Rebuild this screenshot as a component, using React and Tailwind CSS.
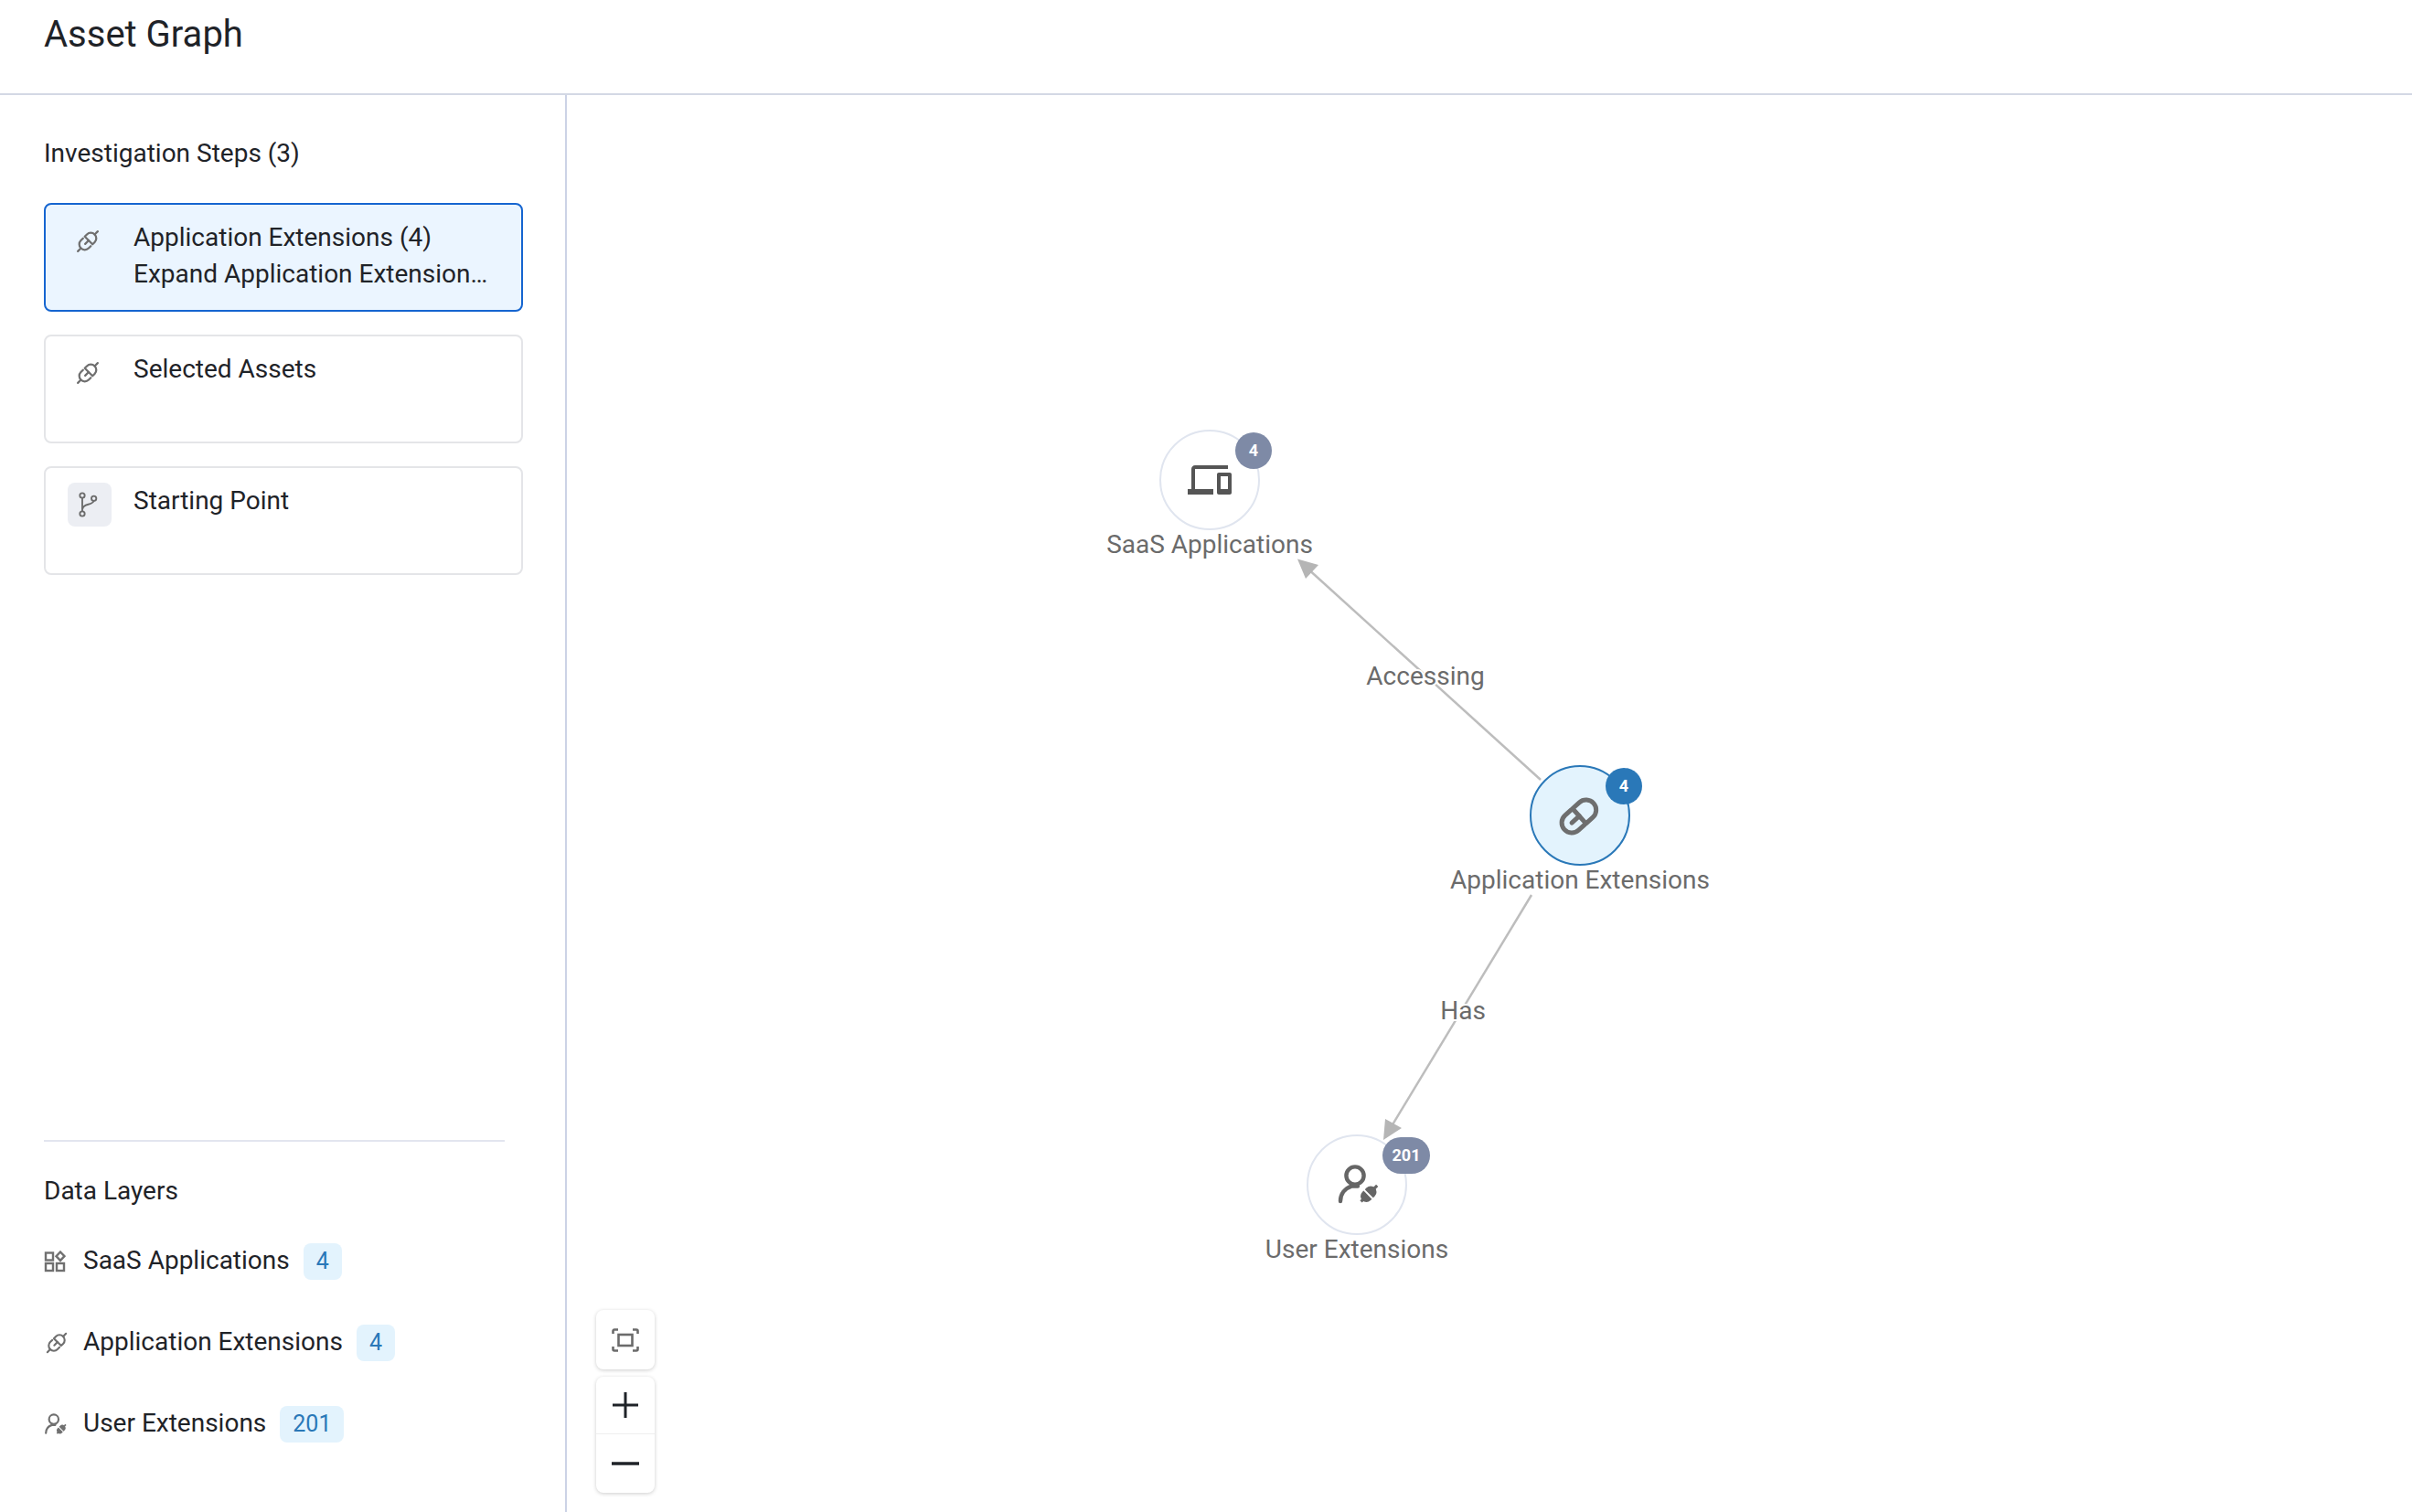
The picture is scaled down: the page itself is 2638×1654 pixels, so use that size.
const font = { fontFamily: "Roboto, sans-serif" };

function PlugIcon({ className, stroke = "#6f6f6f", width = 1.7 }) {
  return (
    <svg viewBox="0 0 24 24" fill="none" stroke={stroke} strokeWidth={width} strokeLinecap="round" strokeLinejoin="round" className={className}>
      <g transform="rotate(-45 12 12)">
        <path d="M0.500 12h3.500" />
        <path d="M11 7.500H8.500a4.500 4.500 0 0 0 0 9H11" />
        <path d="M13 7.500h2.500a4.500 4.500 0 0 1 0 9H13z" />
        <path d="M9 12h4" />
        <path d="M20 12h3.500" />
      </g>
    </svg>
  );
}

function NodeLinkIcon({ className }) {
  return (
    <svg viewBox="0 0 64 64" fill="none" stroke="#6e6e6e" strokeWidth="5" strokeLinecap="round" strokeLinejoin="round" className={className}>
      <g transform="rotate(-42 32 32)">
        <path d="M29 21h-9a11 11 0 0 0 0 22h9" />
        <path d="M31 21h10a11 11 0 0 1 0 22H31z" />
        <path d="M20 32h11" />
      </g>
    </svg>
  );
}

function BranchIcon({ className }) {
  return (
    <svg viewBox="0 0 24 24" fill="none" stroke="#6b6b6b" strokeWidth="1.400" className={className}>
      <circle cx="7.500" cy="4.500" r="2" />
      <circle cx="17" cy="7" r="2" />
      <circle cx="7.500" cy="19.500" r="2" />
      <path d="M7.500 6.500v11" />
      <path d="M7.800 15.500c0-2.200 2-3 4.600-3.700 2.400-.6 4.200-1.200 4.400-2.800" />
    </svg>
  );
}

function GridIcon({ className }) {
  return (
    <svg viewBox="0 0 24 24" fill="none" stroke="#707070" strokeWidth="2.400" className={className}>
      <rect x="2" y="2.500" width="8" height="8" />
      <rect x="2" y="14" width="8" height="8" />
      <rect x="14" y="14" width="8" height="8" />
      <path d="M18 1.500l4.500 4.700-4.500 4.700-4.500-4.700z" />
    </svg>
  );
}

function UserPlugIcon({ className, color = "#707070", sw = 2 }) {
  return (
    <svg viewBox="0 0 24 24" fill="none" stroke={color} strokeWidth={sw} strokeLinecap="round" className={className}>
      <circle cx="10" cy="7" r="4.800" />
      <path d="M2 21c0-4 2.500-7 6-8.200h3.500" />
      <g transform="rotate(-45 17.500 17)" fill={color} stroke="none">
        <path d="M11.500 16.200h2.400v1.600h-2.400z" />
        <path d="M16.700 13.800h-1a3.200 3.200 0 0 0 0 6.400h1z" />
        <path d="M17.700 13.800h1.300a3.200 3.200 0 0 1 0 6.400h-1.300z" />
        <path d="M21.500 16.200H24v1.600h-2.500z" />
      </g>
    </svg>
  );
}

function DevicesIcon({ className }) {
  return (
    <svg viewBox="0 0 24 24" fill="#555555" className={className}>
      <path d="M4 6h18V4H4c-1.100 0-2 .9-2 2v11H0v3h14v-3H4V6zm19 2h-6c-.55 0-1 .45-1 1v10c0 .55.45 1 1 1h6c.55 0 1-.45 1-1V9c0-.55-.45-1-1-1zm-1 9h-4v-7h4v7z" />
    </svg>
  );
}

function FitIcon({ className }) {
  return (
    <svg viewBox="0 0 30 26" fill="none" stroke="#6b6b6b" strokeWidth="2.600" className={className}>
      <path d="M1.500 6V3A1.500 1.500 0 0 1 3 1.500h4" />
      <path d="M23 1.500h4A1.500 1.500 0 0 1 28.500 3v3" />
      <path d="M28.500 20v3a1.500 1.500 0 0 1-1.500 1.500h-4" />
      <path d="M7 24.500H3A1.500 1.500 0 0 1 1.500 23v-3" />
      <rect x="7.500" y="7" width="15" height="12" />
    </svg>
  );
}

function StepCard({ active, lines }) {
  return (
    <div className={active
      ? "h-[119px] rounded-lg border-2 border-[#1565d0] bg-[#ebf5ff] flex"
      : "h-[119px] rounded-lg border-2 border-[#e4e5e8] bg-white flex"}>
      <div className="w-[96px] shrink-0 pl-[30px] pt-[24px]">
        <PlugIcon className="w-[32px] h-[32px]" />
      </div>
      <div className="flex-1 min-w-0 pt-[16px] text-[28px] leading-[40px] text-[#1f2328]">
        {lines.map((l) => <div key={l} className="whitespace-nowrap">{l}</div>)}
      </div>
    </div>
  );
}

function LayerRow({ icon, label, count }) {
  return (
    <div className="h-[40px] flex items-center">
      <div className="w-[43px] shrink-0 flex items-center">{icon}</div>
      <span className="text-[28px] leading-[40px] -mt-[2px] text-[#1f2328]">{label}</span>
      <span className="ml-[15px] h-[40px] px-[14px] rounded-lg bg-[#e3f3fd] text-[#2a78b8] text-[25px] leading-[40px]">{count}</span>
    </div>
  );
}

function Node({ x, y, icon, label, count, active, badgeX, badgeW }) {
  return (
    <div className="absolute" style={{ left: x - 620, top: y - 104 }}>
      <div className={active
        ? "absolute -left-[55px] -top-[55px] w-[110px] h-[110px] rounded-full bg-[#e3f3fd] border-2 border-[#2a78b8] flex items-center justify-center"
        : "absolute -left-[55px] -top-[55px] w-[110px] h-[110px] rounded-full bg-white border-2 border-[#e0e5ef] flex items-center justify-center"}>
        {icon}
      </div>
      <div className={active
        ? "absolute h-[40px] rounded-full bg-[#2a78b8] text-white text-[18px] font-bold leading-[40px] text-center"
        : "absolute h-[40px] rounded-full bg-[#7e8aa6] text-white text-[18px] font-bold leading-[40px] text-center"}
        style={{ left: badgeX, top: -52, width: badgeW }}>{count}</div>
      <div className="absolute top-[53px] left-0 -translate-x-1/2 whitespace-nowrap text-[28px] leading-[36px] text-[#6b6b6b]">{label}</div>
    </div>
  );
}

export default function App() {
  return (
    <div className="h-[1654px] w-full flex flex-col bg-white overflow-hidden" style={font}>
      <header className="h-[104px] shrink-0 border-b-2 border-[#d3d8e4] pl-[48px]">
        <h1 className="text-[40px] leading-[76px] font-normal text-[#1f2328]">Asset Graph</h1>
      </header>
      <div className="flex-1 flex min-h-0">
        <aside className="w-[620px] shrink-0 border-r-2 border-[#ccd3e6] flex flex-col pl-[48px]">
          <div className="pt-[44px] text-[28px] leading-[40px] text-[#1f2328]">Investigation Steps (3)</div>
          <div className="mt-[34px] w-[524px] flex flex-col gap-[25px]">
            <StepCard active lines={["Application Extensions (4)", "Expand Application Extension…"]} />
            <StepCard lines={["Selected Assets"]} />
            <div className="h-[119px] rounded-lg border-2 border-[#e4e5e8] bg-white flex">
              <div className="w-[96px] shrink-0 pl-[24px] pt-[16px]">
                <div className="w-[48px] h-[48px] rounded-lg bg-[#eceef3] flex items-center justify-center pr-[4px]">
                  <BranchIcon className="w-[32px] h-[32px]" />
                </div>
              </div>
              <div className="pt-[16px] text-[28px] leading-[40px] text-[#1f2328]">Starting Point</div>
            </div>
          </div>
          <div className="mt-auto w-[504px] border-t-2 border-[#e2e5ef] pt-[34px] pb-[76px]">
            <div className="text-[28px] leading-[40px] text-[#1f2328]">Data Layers</div>
            <div className="mt-[37px] flex flex-col gap-[49px]">
              <LayerRow icon={<GridIcon className="w-[24px] h-[24px]" />} label="SaaS Applications" count="4" />
              <LayerRow icon={<PlugIcon className="w-[30px] h-[30px] -ml-[1px] shrink-0" />} label="Application Extensions" count="4" />
              <LayerRow icon={<UserPlugIcon className="w-[26px] h-[26px]" />} label="User Extensions" count="201" />
            </div>
          </div>
        </aside>
        <main className="relative flex-1">
          <svg className="absolute left-0 top-0 w-full h-full" fill="none">
            <g transform="translate(-620 -104)">
              <path d="M1685 853L1428 620" stroke="#bdbdbd" strokeWidth="2.500" />
              <path d="M1419 611.500L1442 618L1428 633z" fill="#b5b5b5" />
              <path d="M1675 979L1522 1232" stroke="#bdbdbd" strokeWidth="2.500" />
              <path d="M1513 1247L1515 1224L1533 1234z" fill="#b5b5b5" />
            </g>
          </svg>
          <div className="absolute left-[939px] top-[618px] -translate-x-1/2 text-[28px] leading-[36px] text-[#6b6b6b] [-webkit-text-stroke:4px_white] [paint-order:stroke_fill]">Accessing</div>
          <div className="absolute left-[980px] top-[984px] -translate-x-1/2 text-[28px] leading-[36px] text-[#6b6b6b] [-webkit-text-stroke:4px_white] [paint-order:stroke_fill]">Has</div>
          <Node x={1323} y={525} label="SaaS Applications" count="4" badgeX={28} badgeW={40} icon={<DevicesIcon className="w-[48px] h-[48px]" />} />
          <Node x={1728} y={892} active label="Application Extensions" count="4" badgeX={28} badgeW={40} icon={<NodeLinkIcon className="w-[64px] h-[64px] shrink-0" />} />
          <Node x={1484} y={1296} label="User Extensions" count="201" badgeX={28} badgeW={52} icon={<UserPlugIcon className="w-[48px] h-[48px] ml-[3px]" color="#666666" sw="2.200" />} />
          <div className="absolute left-[32px] top-[1329px] w-[64px] flex flex-col gap-[8px]">
            <div className="h-[65px] rounded-lg bg-white shadow-[0_1px_4px_rgba(0,0,0,0.2)] flex items-center justify-center">
              <FitIcon className="w-[30px] h-[26px]" />
            </div>
            <div className="h-[127px] rounded-lg bg-white shadow-[0_1px_4px_rgba(0,0,0,0.2)] flex flex-col">
              <div className="h-[63px] border-b border-[#eeeeee] flex items-center justify-center">
                <svg viewBox="0 0 30 30" className="w-[30px] h-[30px]" stroke="#1f2328" strokeWidth="3"><path d="M15 1v28M1 15h28" /></svg>
              </div>
              <div className="flex-1 flex items-center justify-center">
                <svg viewBox="0 0 30 30" className="w-[30px] h-[30px]" stroke="#1f2328" strokeWidth="3.500"><path d="M0 15h30" /></svg>
              </div>
            </div>
          </div>
        </main>
      </div>
    </div>
  );
}
